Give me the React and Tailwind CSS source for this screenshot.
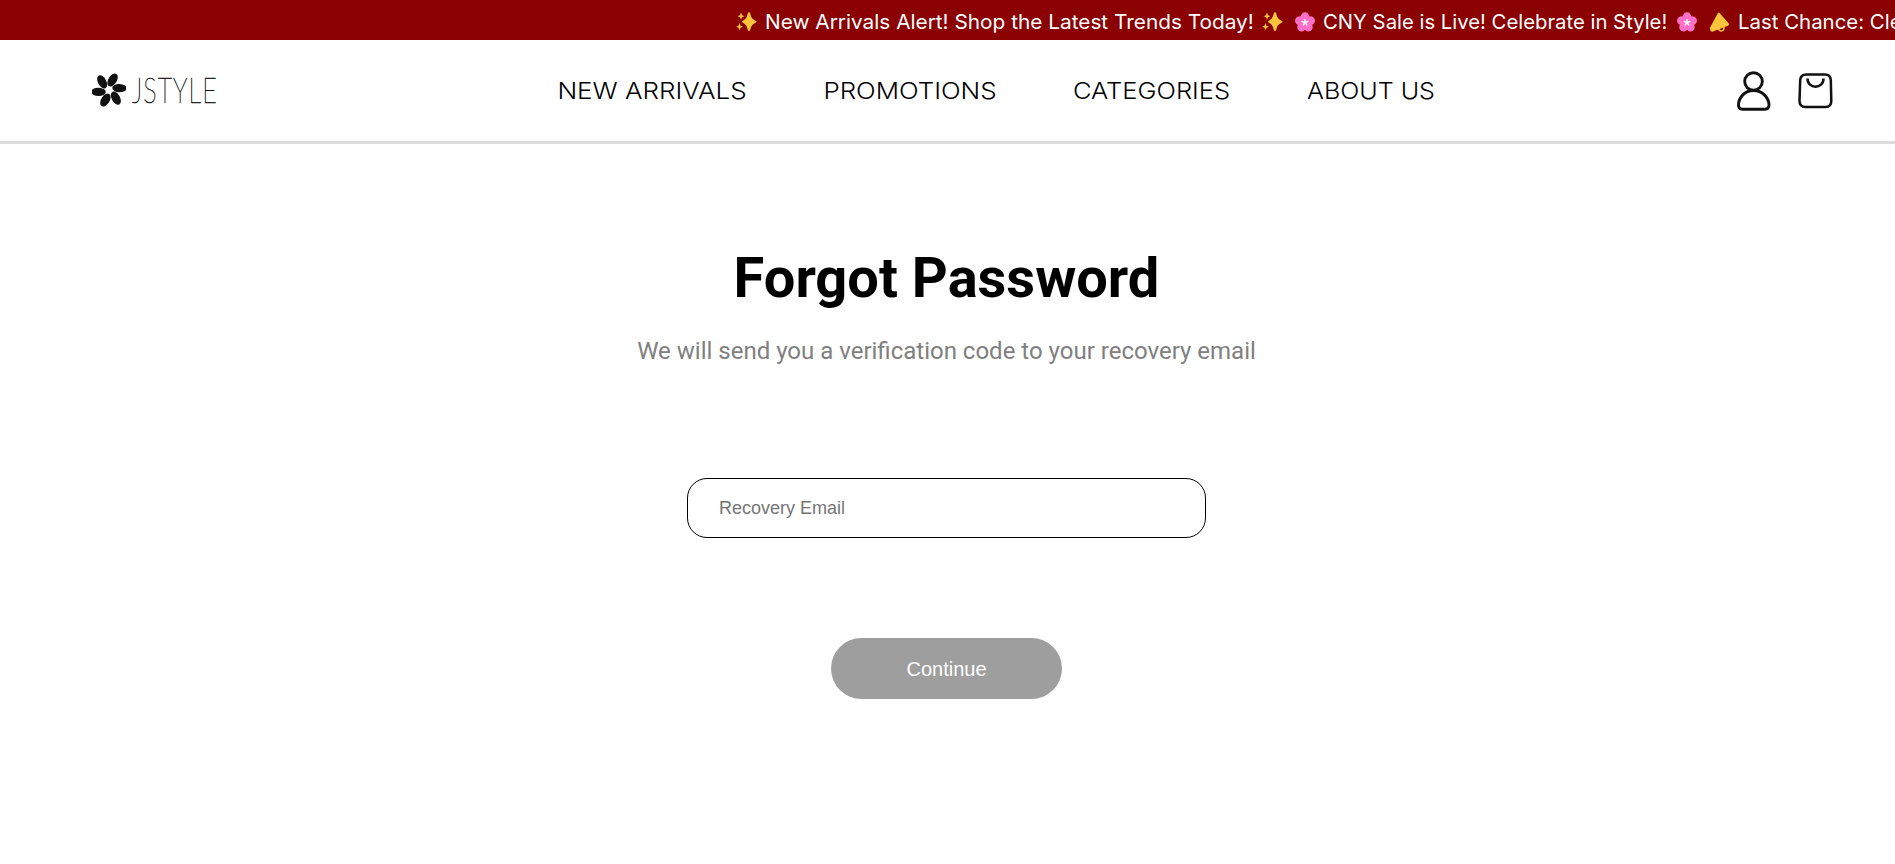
const Sparkles = () => (
  <svg viewBox="0 0 21 20" className="h-5 w-[21px] shrink-0" fill="#fcc43c">
    <path d="M13 0.3Q13.9 0.300 14.200 1.300C15.200 5.500 16 7 20 9Q21 9.600 20 10.400C16 12.200 15.200 14 14.200 18Q13.900 19 13 19Q12.100 19 11.800 18C10.800 14 10 12.200 6.500 10.400Q5.500 9.600 6.500 9C10 7 10.800 5.500 11.800 1.300Q12.100 0.300 13 0.300Z" />
    <path d="M5 0.500L6 3.200L8.500 4.200L6 5.200L5 7.700L4 5.200L1.500 4.200L4 3.200Z" />
    <path d="M3.500 11L4.500 13.700L7 14.700L4.500 15.700L3.500 18.500L2.500 15.700L0.200 14.700L2.500 13.700Z" />
  </svg>
);

const petals = [0, 72, 144, 216, 288];

const Blossom = () => (
  <svg viewBox="-10 -10.500 20 20" className="h-5 w-5 shrink-0">
    {petals.map((a) => (
      <ellipse key={a} cx="0" cy="-5.600" rx="4.400" ry="4.600" fill="#ff6fc8" transform={`rotate(${a})`} />
    ))}
    {petals.map((a) => (
      <line key={a} y2="-3.600" stroke="#fff" strokeWidth="1.400" transform={`rotate(${a})`} />
    ))}
  </svg>
);

const Megaphone = () => (
  <svg viewBox="0 0 21 21" className="h-[21px] w-[21px] shrink-0">
    <path d="M8.800 1.200Q9.700 0 10.800 1.200L19.800 11.500Q20.600 13 19 13.800L4 19.500Q2.500 20.300 1.500 18.500Q0.300 16.500 1.200 15.200Z" fill="#fcc43c" />
    <path d="M9.500 17Q10.500 19.500 13 18.800Q15.800 17.800 14.800 15" fill="none" stroke="#fcc43c" strokeWidth="1.500" />
  </svg>
);

const Flower = () => (
  <svg viewBox="-17 -17 34 34" className="h-[34px] w-[34px] shrink-0" fill="#111">
    {[0, 60, 120, 180, 240, 300].map((a) => (
      <ellipse key={a} cx="3.600" cy="-10" rx="4.200" ry="7.200" transform={`rotate(${a}) rotate(32 3.600 -10)`} />
    ))}
  </svg>
);

const navClass = "flex justify-center whitespace-nowrap";

export default function App() {
  return (
    <div className="h-[864px] w-full overflow-hidden bg-white font-['Inter',sans-serif] text-black">
      <div className="flex h-10 items-center overflow-hidden bg-[#8b0000] pt-1 pl-[736px] text-[20px] whitespace-nowrap text-white">
        <Sparkles />
        <span className="ml-[8px] w-[497px] shrink-0">
          <span className="inline-block origin-left scale-x-[1.04]">New Arrivals Alert! Shop the Latest Trends Today!</span>
        </span>
        <Sparkles />
        <span className="ml-[12px]" />
        <Blossom />
        <span className="ml-[8px] w-[354px] shrink-0">
          <span className="inline-block origin-left scale-x-[1.015]">CNY Sale is Live! Celebrate in Style!</span>
        </span>
        <Blossom />
        <span className="ml-[12px]" />
        <Megaphone />
        <span className="ml-[8px] shrink-0 origin-left scale-x-[1.02]">Last Chance: Clearance Sale Ends Soon!</span>
      </div>
      <header className="flex h-[104px] items-center border-b-[3px] border-[#dcdcdc] pl-[92px]">
        <div className="flex w-[464px] items-center pb-0.5">
          <Flower />
          <span className="ml-[6px] origin-left scale-x-[0.7] pb-0.5 font-['Lato',sans-serif] text-[36px] leading-none font-thin tracking-[1.5px] [-webkit-text-stroke:0.6px_#111]">JSTYLE</span>
        </div>
        <nav className="flex gap-[77px] pt-0.5 pl-px text-[23px] font-light">
          <a className={`${navClass} w-[190px] scale-x-[1.13]`}>NEW ARRIVALS</a>
          <a className={`${navClass} w-[172px] scale-x-[1.125]`}>PROMOTIONS</a>
          <a className={`${navClass} w-[157px] scale-x-[1.11]`}>CATEGORIES</a>
          <a className={`${navClass} w-[128px] scale-x-[1.09]`}>ABOUT US</a>
        </nav>
        <div className="ml-auto flex items-center gap-[26px] pr-[61px]">
          <svg viewBox="0 0 36 40" className="h-10 w-9" fill="none" stroke="#111" strokeWidth="2.900">
            <circle cx="17.500" cy="10.500" r="8.800" />
            <path d="M17.500 19.500C8.500 19.500 2.500 27 2.500 34Q2.500 38.200 6.500 38.200H29Q33 38.200 33 34C33 27 26.500 19.500 17.500 19.500Z" />
          </svg>
          <svg viewBox="0 0 36 36" className="h-9 w-9" fill="none" stroke="#111" strokeWidth="2.500">
            <path d="M8.500 1.500H27Q32.500 1.500 32.800 7L33.300 28Q33.300 34 27.500 34H7.500Q1.500 34 1.500 28L2.200 7Q2.500 1.500 8.500 1.500Z" />
            <path d="M9.500 5.500C9.500 16.500 25.500 16.500 25.500 5.500" />
          </svg>
        </div>
      </header>
      <main className="flex flex-col items-center pr-[2px]">
        <h1 className="mt-[101px] font-['Roboto',sans-serif] text-[56px] leading-[66px] font-bold">Forgot Password</h1>
        <p className="mt-[26px] font-['Roboto',sans-serif] text-[24px] leading-[28px] text-[#808080]">We will send you a verification code to your recovery email</p>
        <input className="mt-[113px] h-[60px] w-[519px] rounded-[20px] border border-black px-[31px] font-['Liberation_Sans',sans-serif] text-[18px] placeholder:text-[#757575]" placeholder="Recovery Email" />
        <button className="mt-[100px] h-[61px] w-[231px] rounded-full bg-[#9e9e9e] font-['Liberation_Sans',sans-serif] text-[20px] text-white">Continue</button>
      </main>
    </div>
  );
}
